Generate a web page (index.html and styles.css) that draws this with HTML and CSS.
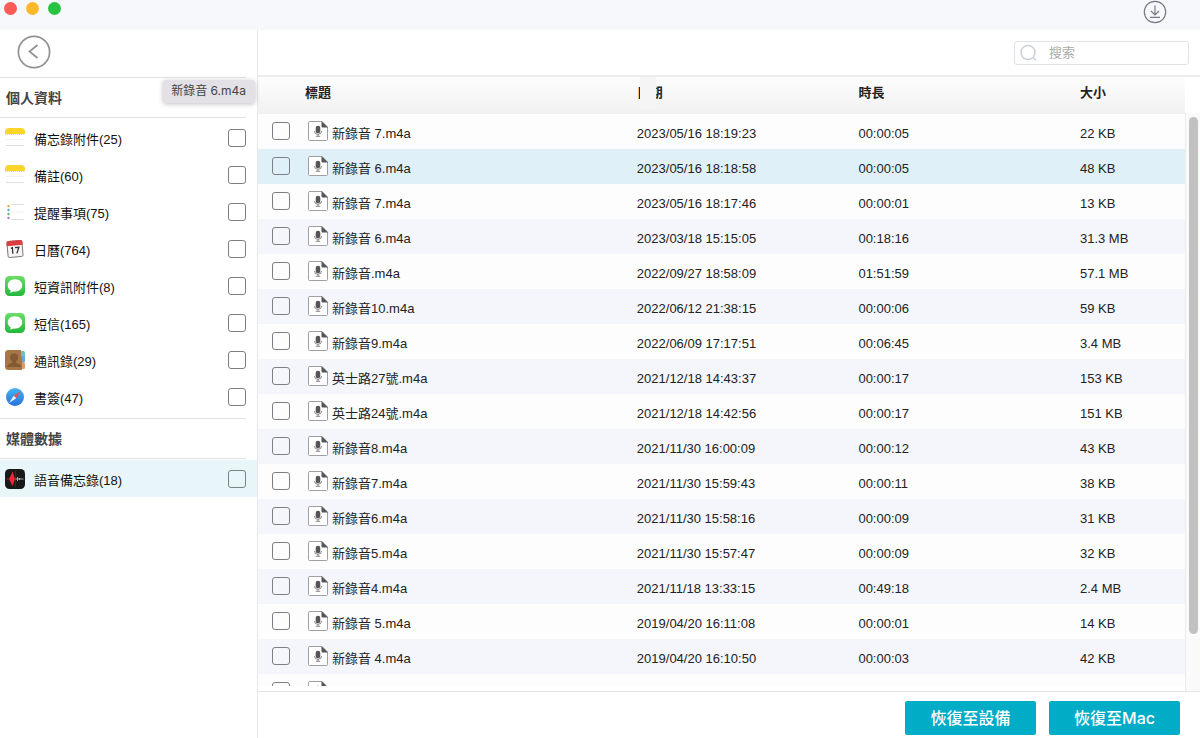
FILE: index.html
```html
<!DOCTYPE html>
<html lang="zh-Hant">
<head>
<meta charset="utf-8">
<title>語音備忘錄</title>
<link rel="stylesheet" href="styles.css">
</head>
<body>
<svg class="sprite" aria-hidden="true">
  <symbol id="audio" viewBox="0 0 20 20">
    <path d="M2 .5H14L19.500 6V18.500Q19.500 19.500 18.500 19.500H1.500Q.5 19.500 .5 18.500V1.500Q.5 .5 2 .5Z" fill="#fff" stroke="#a0a0a0"/>
    <path d="M13.500 0L20 6.500H14.500Q13.500 6.500 13.500 5.500Z" fill="#555"/>
    <rect x="7.700" y="4.700" width="4.600" height="7.600" rx="2.300" fill="#555"/>
    <path d="M6.500 10Q6.500 13.300 10 13.300Q13.500 13.300 13.500 10M10 13.300V15M7.800 15.300H12.200" fill="none" stroke="#777" stroke-width=".9"/>
  </symbol>
  <symbol id="note" viewBox="0 0 20 20">
    <path d="M0 6V4Q0 0 4 0H16Q20 0 20 4V6Z" fill="#fbd42c"/>
    <path d="M0 6.500H20" stroke="#e3cd80" stroke-width=".8" stroke-dasharray="1 1"/>
    <path d="M1 17.500H19" stroke="#dedede"/><path d="M1 11.500H19" stroke="#f2f2f2"/>
  </symbol>
  <symbol id="remind" viewBox="0 0 20 20">
    <path d="M6 2.500H19M6 17.500H19" stroke="#dedede"/><path d="M6 10H19" stroke="#eee"/>
    <circle cx="3.500" cy="4" r="1.200" fill="#f0a24a"/><circle cx="3.500" cy="8" r="1.200" fill="#58a6e0"/><circle cx="3.500" cy="12" r="1.200" fill="#6ab36a"/><circle cx="3.500" cy="16" r="1.200" fill="#b07acb"/>
  </symbol>
  <symbol id="cal" viewBox="0 0 20 20">
    <g transform="rotate(-5 10 10)"><rect x="2.500" y="2" width="15" height="16" rx="1.500" fill="#f7f4f4" stroke="#776b6b" stroke-width=".9"/>
    <path d="M2 6.500V3.500Q2 1.500 4 1.500H16Q18 1.500 18 3.500V6.500Z" fill="#dc3d42"/>
    <path d="M6 9L7.500 8.500V14.500M10 8.700H14L11.500 14.500" fill="none" stroke="#333" stroke-width="1.300"/></g>
  </symbol>
  <symbol id="msg" viewBox="0 0 20 20">
    <linearGradient id="green" x2="0" y2="1"><stop stop-color="#6edc68"/><stop offset="1" stop-color="#22b83c"/></linearGradient>
    <rect width="20" height="20" rx="4.500" fill="url(#green)"/>
    <path d="M10 3.200C5.500 3.200 2.800 6 2.800 9.500C2.800 11.900 4 13.600 5.800 14.600C5.700 15.600 5.200 16.300 4.500 16.800C6 16.800 7.300 16.200 8.200 15.600C13.500 16 17.200 13.300 17.200 9.500C17.200 6 14.500 3.200 10 3.200Z" fill="#fff"/>
  </symbol>
  <symbol id="contacts" viewBox="0 0 20 20">
    <rect x="13" y="1" width="7" height="6" rx="1.500" fill="#68c3b4"/><rect x="13" y="6" width="7" height="6" fill="#68a9de"/><rect x="13" y="12" width="7" height="7" rx="1.500" fill="#d9a06a"/>
    <path d="M3.500 0H16V6L17 9V20H3.500Q0 20 0 16.500V3.500Q0 0 3.500 0Z" fill="#a67645"/>
    <circle cx="9" cy="7.500" r="4" fill="#815a33"/><path d="M7 10H11V13Q16 14 16.500 17H2Q2.500 14 7 13Z" fill="#815a33"/>
  </symbol>
  <symbol id="safari" viewBox="0 0 20 20">
    <linearGradient id="blue" x2="0" y2="1"><stop stop-color="#43b5f4"/><stop offset="1" stop-color="#2870dc"/></linearGradient>
    <circle cx="10" cy="10" r="9" fill="url(#blue)"/>
    <path d="M16 4L8.800 8.800L11.200 11.200Z" fill="#e65356"/><path d="M4 16L8.800 8.800L11.200 11.200Z" fill="#eef5fc"/>
  </symbol>
  <symbol id="voice" viewBox="0 0 20 20">
    <rect width="20" height="20" rx="4.500" fill="#191919"/>
    <path d="M1.500 10H4" stroke="#a22"/><path d="M4 10L6.500 5L7.500 2.500L8.500 5.500L10 10L8.500 14.500L7.500 17L6.500 15Z" fill="#ef2637"/>
    <path d="M10.500 2V18" stroke="#7d2027" stroke-width=".6"/><path d="M10.500 10H18.500M12.500 8V12M14.500 9V11" stroke="#b9b9b9" stroke-width=".9"/>
  </symbol>
</svg>
<div class="app">
  <header class="titlebar">
    <div class="lights"><i class="light red"></i><i class="light yellow"></i><i class="light green"></i></div>
    <button class="icon-btn" aria-label="下載">
      <svg width="24" height="24" viewBox="0 0 24 24" fill="none" stroke="#757983" stroke-width="1.200"><circle cx="12" cy="12" r="10.700"/><path d="M12 5.500V14.500M8 11L12 15L16 11M7 17.300H17"/></svg>
    </button>
  </header>
  <div class="body">
    <aside class="sidebar">
      <div class="back">
        <button class="icon-btn" aria-label="返回">
          <svg width="34" height="34" viewBox="0 0 34 34" fill="none" stroke="#929292" stroke-width="1.700"><circle cx="17" cy="17" r="15.600"/><path d="M20.500 10L12.500 16.500L20.500 23"/></svg>
        </button>
      </div>
      <h2 class="group">個人資料</h2>
      <div class="items">
        <label class="item"><svg class="app-icon"><use href="#note"/></svg><span>備忘錄附件(25)</span><input type="checkbox" class="check"></label>
        <label class="item"><svg class="app-icon"><use href="#note"/></svg><span>備註(60)</span><input type="checkbox" class="check"></label>
        <label class="item"><svg class="app-icon"><use href="#remind"/></svg><span>提醒事項(75)</span><input type="checkbox" class="check"></label>
        <label class="item"><svg class="app-icon"><use href="#cal"/></svg><span>日曆(764)</span><input type="checkbox" class="check"></label>
        <label class="item"><svg class="app-icon"><use href="#msg"/></svg><span>短資訊附件(8)</span><input type="checkbox" class="check"></label>
        <label class="item"><svg class="app-icon"><use href="#msg"/></svg><span>短信(165)</span><input type="checkbox" class="check"></label>
        <label class="item"><svg class="app-icon"><use href="#contacts"/></svg><span>通訊錄(29)</span><input type="checkbox" class="check"></label>
        <label class="item"><svg class="app-icon"><use href="#safari"/></svg><span>書簽(47)</span><input type="checkbox" class="check"></label>
      </div>
      <h2 class="group">媒體數據</h2>
      <div class="items">
        <label class="item active"><svg class="app-icon"><use href="#voice"/></svg><span>語音備忘錄(18)</span><input type="checkbox" class="check"></label>
      </div>
      <div class="tooltip" role="tooltip">新錄音 6.m4a</div>
    </aside>
    <main class="main">
      <div class="toolbar">
        <label class="search">
          <svg width="18" height="18" viewBox="0 0 18 18" fill="none" stroke="#cdd2d9" stroke-width="1.600"><circle cx="8" cy="8.500" r="7"/><path d="M13 13.500L16 16.500"/></svg>
          <input type="search" placeholder="搜索" aria-label="搜索">
        </label>
      </div>
      <div class="list">
        <div class="table-wrap">
          <table class="files">
            <colgroup><col class="c-check"><col class="c-title"><col class="c-date"><col class="c-time"><col></colgroup>
            <thead><tr><td></td><th scope="col">標題</th><th scope="col"><span class="date-head">日期</span></th><th scope="col">時長</th><th scope="col">大小</th></tr></thead>
            <tbody>
              <tr><td><input type="checkbox" class="check" aria-label="選取第 1 項"></td><td><div class="file"><svg class="doc"><use href="#audio"/></svg><span>新錄音 7.m4a</span></div></td><td>2023/05/16 18:19:23</td><td>00:00:05</td><td>22 KB</td></tr>
              <tr class="hover"><td><input type="checkbox" class="check" aria-label="選取第 2 項"></td><td><div class="file"><svg class="doc"><use href="#audio"/></svg><span>新錄音 6.m4a</span></div></td><td>2023/05/16 18:18:58</td><td>00:00:05</td><td>48 KB</td></tr>
              <tr><td><input type="checkbox" class="check" aria-label="選取第 3 項"></td><td><div class="file"><svg class="doc"><use href="#audio"/></svg><span>新錄音 7.m4a</span></div></td><td>2023/05/16 18:17:46</td><td>00:00:01</td><td>13 KB</td></tr>
              <tr><td><input type="checkbox" class="check" aria-label="選取第 4 項"></td><td><div class="file"><svg class="doc"><use href="#audio"/></svg><span>新錄音 6.m4a</span></div></td><td>2023/03/18 15:15:05</td><td>00:18:16</td><td>31.3 MB</td></tr>
              <tr><td><input type="checkbox" class="check" aria-label="選取第 5 項"></td><td><div class="file"><svg class="doc"><use href="#audio"/></svg><span>新錄音.m4a</span></div></td><td>2022/09/27 18:58:09</td><td>01:51:59</td><td>57.1 MB</td></tr>
              <tr><td><input type="checkbox" class="check" aria-label="選取第 6 項"></td><td><div class="file"><svg class="doc"><use href="#audio"/></svg><span>新錄音10.m4a</span></div></td><td>2022/06/12 21:38:15</td><td>00:00:06</td><td>59 KB</td></tr>
              <tr><td><input type="checkbox" class="check" aria-label="選取第 7 項"></td><td><div class="file"><svg class="doc"><use href="#audio"/></svg><span>新錄音9.m4a</span></div></td><td>2022/06/09 17:17:51</td><td>00:06:45</td><td>3.4 MB</td></tr>
              <tr><td><input type="checkbox" class="check" aria-label="選取第 8 項"></td><td><div class="file"><svg class="doc"><use href="#audio"/></svg><span>英士路27號.m4a</span></div></td><td>2021/12/18 14:43:37</td><td>00:00:17</td><td>153 KB</td></tr>
              <tr><td><input type="checkbox" class="check" aria-label="選取第 9 項"></td><td><div class="file"><svg class="doc"><use href="#audio"/></svg><span>英士路24號.m4a</span></div></td><td>2021/12/18 14:42:56</td><td>00:00:17</td><td>151 KB</td></tr>
              <tr><td><input type="checkbox" class="check" aria-label="選取第 10 項"></td><td><div class="file"><svg class="doc"><use href="#audio"/></svg><span>新錄音8.m4a</span></div></td><td>2021/11/30 16:00:09</td><td>00:00:12</td><td>43 KB</td></tr>
              <tr><td><input type="checkbox" class="check" aria-label="選取第 11 項"></td><td><div class="file"><svg class="doc"><use href="#audio"/></svg><span>新錄音7.m4a</span></div></td><td>2021/11/30 15:59:43</td><td>00:00:11</td><td>38 KB</td></tr>
              <tr><td><input type="checkbox" class="check" aria-label="選取第 12 項"></td><td><div class="file"><svg class="doc"><use href="#audio"/></svg><span>新錄音6.m4a</span></div></td><td>2021/11/30 15:58:16</td><td>00:00:09</td><td>31 KB</td></tr>
              <tr><td><input type="checkbox" class="check" aria-label="選取第 13 項"></td><td><div class="file"><svg class="doc"><use href="#audio"/></svg><span>新錄音5.m4a</span></div></td><td>2021/11/30 15:57:47</td><td>00:00:09</td><td>32 KB</td></tr>
              <tr><td><input type="checkbox" class="check" aria-label="選取第 14 項"></td><td><div class="file"><svg class="doc"><use href="#audio"/></svg><span>新錄音4.m4a</span></div></td><td>2021/11/18 13:33:15</td><td>00:49:18</td><td>2.4 MB</td></tr>
              <tr><td><input type="checkbox" class="check" aria-label="選取第 15 項"></td><td><div class="file"><svg class="doc"><use href="#audio"/></svg><span>新錄音 5.m4a</span></div></td><td>2019/04/20 16:11:08</td><td>00:00:01</td><td>14 KB</td></tr>
              <tr><td><input type="checkbox" class="check" aria-label="選取第 16 項"></td><td><div class="file"><svg class="doc"><use href="#audio"/></svg><span>新錄音 4.m4a</span></div></td><td>2019/04/20 16:10:50</td><td>00:00:03</td><td>42 KB</td></tr>
              <tr><td><input type="checkbox" class="check" aria-label="選取第 17 項"></td><td><div class="file"><svg class="doc"><use href="#audio"/></svg></div></td><td></td><td></td><td></td></tr>
            </tbody>
          </table>
        </div>
        <div class="track"><div class="thumb"></div></div>
      </div>
      <footer class="footer">
        <button class="primary">恢復至設備</button>
        <button class="primary">恢復至Mac</button>
      </footer>
    </main>
  </div>
</div>
</body>
</html>
```
FILE: styles.css
```css
* { box-sizing: border-box; }

body {
  margin: 0;
  background: #fff;
  color: #222;
  font: 13px/18px "Liberation Sans", "Noto Sans CJK TC", sans-serif;
}

button, input { font: inherit; margin: 0; }
.sprite { position: absolute; width: 0; height: 0; }
.app { display: flex; flex-direction: column; height: 100vh; overflow: hidden; }

.titlebar {
  display: flex;
  justify-content: space-between;
  flex: none;
  height: 30px;
  padding: 0 33px 0 4px;
  background: #f6f8fb;
}
.lights { display: flex; gap: 9px; padding-top: 2px; }
.light { width: 13px; height: 13px; border-radius: 50%; }
.red { background: #fc5b57; }
.yellow { background: #fcb92c; }
.green { background: #27c53f; }
.icon-btn { display: flex; align-self: flex-start; padding: 0; border: 0; background: none; }

.body { display: flex; flex: 1; min-height: 0; }

.sidebar {
  position: relative;
  flex: none;
  width: 258px;
  border-right: 1px solid #e8e8ea;
}
.back {
  height: 48px;
  margin-right: 11px;
  padding: 5px 17px;
  border-bottom: 1px solid #e2e2e2;
}
.group {
  height: 40px;
  margin: 0 11px 0 0;
  padding-left: 6px;
  border-bottom: 1px solid #e2e2e2;
  color: #444;
  font-size: 14px;
  line-height: 40px;
}
.items { padding-top: 1px; }
.items + .group { margin-top: 3px; border-top: 1px solid #e2e2e2; height: 41px; }
.item {
  display: flex;
  align-items: center;
  height: 37px;
  padding: 0 11px 0 5px;
  color: #111;
}
.item span { flex: 1; padding: 4px 0 0 9px; }
.active { background: #e8f6f9; }
.app-icon { width: 20px; height: 20px; }

.check {
  appearance: none;
  display: block;
  width: 18px;
  height: 18px;
  border: 1px solid #7c7f83;
  border-radius: 3px;
}

.tooltip {
  position: absolute;
  top: 50px;
  right: 2px;
  padding: 2px 9px 3px 8px;
  border-radius: 3px;
  background: #e3e0e6;
  box-shadow: 0 1px 5px rgba(0, 0, 0, .25);
  color: #444;
  font: 12px/18px Inter, "Noto Sans CJK TC", sans-serif;
}

.main { display: flex; flex: 1; flex-direction: column; min-width: 0; }
.toolbar {
  display: flex;
  justify-content: flex-end;
  align-items: center;
  flex: none;
  height: 47px;
  padding-right: 11px;
  border-bottom: 2px solid #ececee;
}
.search {
  display: flex;
  align-items: center;
  gap: 11px;
  width: 175px;
  height: 24px;
  padding: 0 5px;
  border: 1px solid #dfe3e8;
  border-radius: 3px;
}
.search input { flex: 1; min-width: 0; padding: 0; border: 0; outline: 0; background: none; }
.search input::placeholder { color: #aaa; }

.list { display: flex; flex: 1; min-height: 0; }
.table-wrap { flex: 1; min-width: 0; margin-bottom: 5px; overflow: hidden; }
.files { width: 100%; table-layout: fixed; border-collapse: collapse; }
.c-check { width: 47px; }
.c-title { width: 35.8%; }
.c-date, .c-time { width: 23.9%; }
.files td, .files th { height: 35px; padding: 0; text-align: left; vertical-align: middle; }
.files thead tr { background: linear-gradient(#fdfdfd, #f1f1f1); }
.files thead th, .files thead td { height: 37px; padding-bottom: 5px; }
.files tbody td { padding-top: 4px; }
.files tbody td:first-child { padding: 0 0 1px 14px; }
.files tbody tr { background: #fdfdfd; }
.files tbody tr:nth-child(even) { background: #f4f6fb; }
.files tbody tr.hover { background: #e0f0f8; }
.files tbody td:nth-child(2) { padding: 0; }
.file { display: flex; align-items: center; gap: 4px; padding-left: 3px; }
.file span { padding-top: 4px; }
.doc { width: 20px; height: 20px; margin-bottom: 1px; }

.date-head { position: relative; }
.date-head::after {
  content: "";
  position: absolute;
  top: -8px;
  left: 3px;
  width: 16px;
  height: 32px;
  background: #f5f5f5;
}

.track {
  flex: none;
  width: 15px;
  margin-top: 36px;
  padding: 4px 2px 0 3px;
  border-left: 1px solid #ececec;
  background: #fafafa;
}
.thumb { width: 9px; height: 90%; border-radius: 5px; background: #c1c1c1; }

.footer {
  display: flex;
  justify-content: flex-end;
  gap: 13px;
  flex: none;
  height: 47px;
  padding: 9px 20px 3px 0;
  border-top: 1px solid #e4e4e8;
}
.primary {
  width: 131px;
  padding: 0;
  border: 0;
  border-radius: 2px;
  background: #00acc6;
  color: #fff;
  font: 500 16px/34px Inter, "Noto Sans CJK TC", sans-serif;
}
```
